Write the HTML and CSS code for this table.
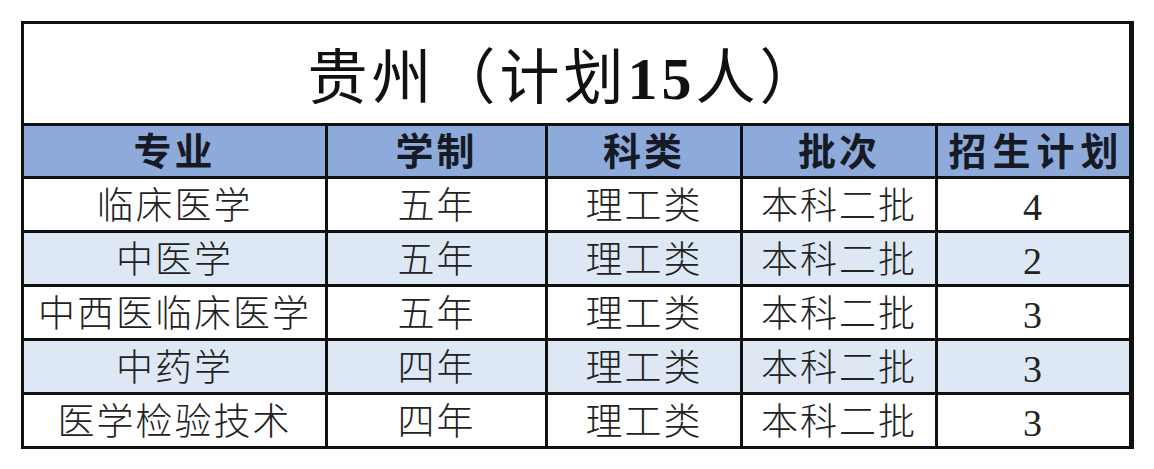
FILE: index.html
```html
<!DOCTYPE html>
<html lang="zh">
<head>
<meta charset="utf-8">
<link rel="stylesheet" href="styles.css">
</head>
<body>
<table class="plan">
  <colgroup>
    <col class="c1"><col class="c2"><col class="c3"><col class="c4"><col class="c5">
  </colgroup>
  <tr class="title-row"><td colspan="5" class="title">贵州（计划<span class="num">15</span>人）</td></tr>
  <tr class="head">
    <th>专业</th><th>学制</th><th>科类</th><th>批次</th><th class="spaced">招生计划</th>
  </tr>
  <tr class="row">
    <td>临床医学</td><td>五年</td><td>理工类</td><td>本科二批</td><td class="n">4</td>
  </tr>
  <tr class="row alt">
    <td>中医学</td><td>五年</td><td>理工类</td><td>本科二批</td><td class="n">2</td>
  </tr>
  <tr class="row">
    <td>中西医临床医学</td><td>五年</td><td>理工类</td><td>本科二批</td><td class="n">3</td>
  </tr>
  <tr class="row alt">
    <td>中药学</td><td>四年</td><td>理工类</td><td>本科二批</td><td class="n">3</td>
  </tr>
  <tr class="row">
    <td>医学检验技术</td><td>四年</td><td>理工类</td><td>本科二批</td><td class="n">3</td>
  </tr>
</table>
</body>
</html>
```
FILE: styles.css
```css
html, body {
  margin: 0;
  padding: 0;
  background: #ffffff;
}
body {
  padding: 21px 0 0 21px;
}
.plan {
  border-collapse: collapse;
  table-layout: fixed;
  width: 1109px;
  font-family: "Liberation Serif", "Noto Sans CJK SC", serif;
  color: #1a1a1a;
  border-left: 3px solid #111;
  border-top: 3px solid #111;
  border-right: 5px solid #111;
  border-bottom: 3px solid #111;
}
.c1 { width: 304px; }
.c2 { width: 220px; }
.c3 { width: 195px; }
.c4 { width: 195px; }
.c5 { width: 195px; }
.plan td, .plan th {
  border: 3px solid #111;
  text-align: center;
  padding: 0;
  white-space: nowrap;
  overflow: hidden;
  line-height: 1;
}
.title-row { height: 102px; }
.title {
  font-size: 60px;
  font-weight: 400;
  color: #111;
  padding-right: 22px !important;
  padding-top: 10px !important;
  letter-spacing: 4px;
}
.title .num {
  font-weight: 700;
}
.head { height: 53px; background: #8eaadb; }
.head th {
  font-size: 38px;
  font-weight: 700;
  color: #151a24;
  letter-spacing: 3px;
  padding-top: 2px;
}
.head th.spaced { letter-spacing: 6px; padding-left: 6px; }
.row { height: 54px; background: #ffffff; }
.row.alt { background: #dde8f4; }
.row td {
  font-size: 37px;
  font-weight: 300;
  color: #222;
  letter-spacing: 2px;
  padding-top: 4px;
}
.row td.n {
  font-size: 38px;
  font-weight: 400;
}
```
